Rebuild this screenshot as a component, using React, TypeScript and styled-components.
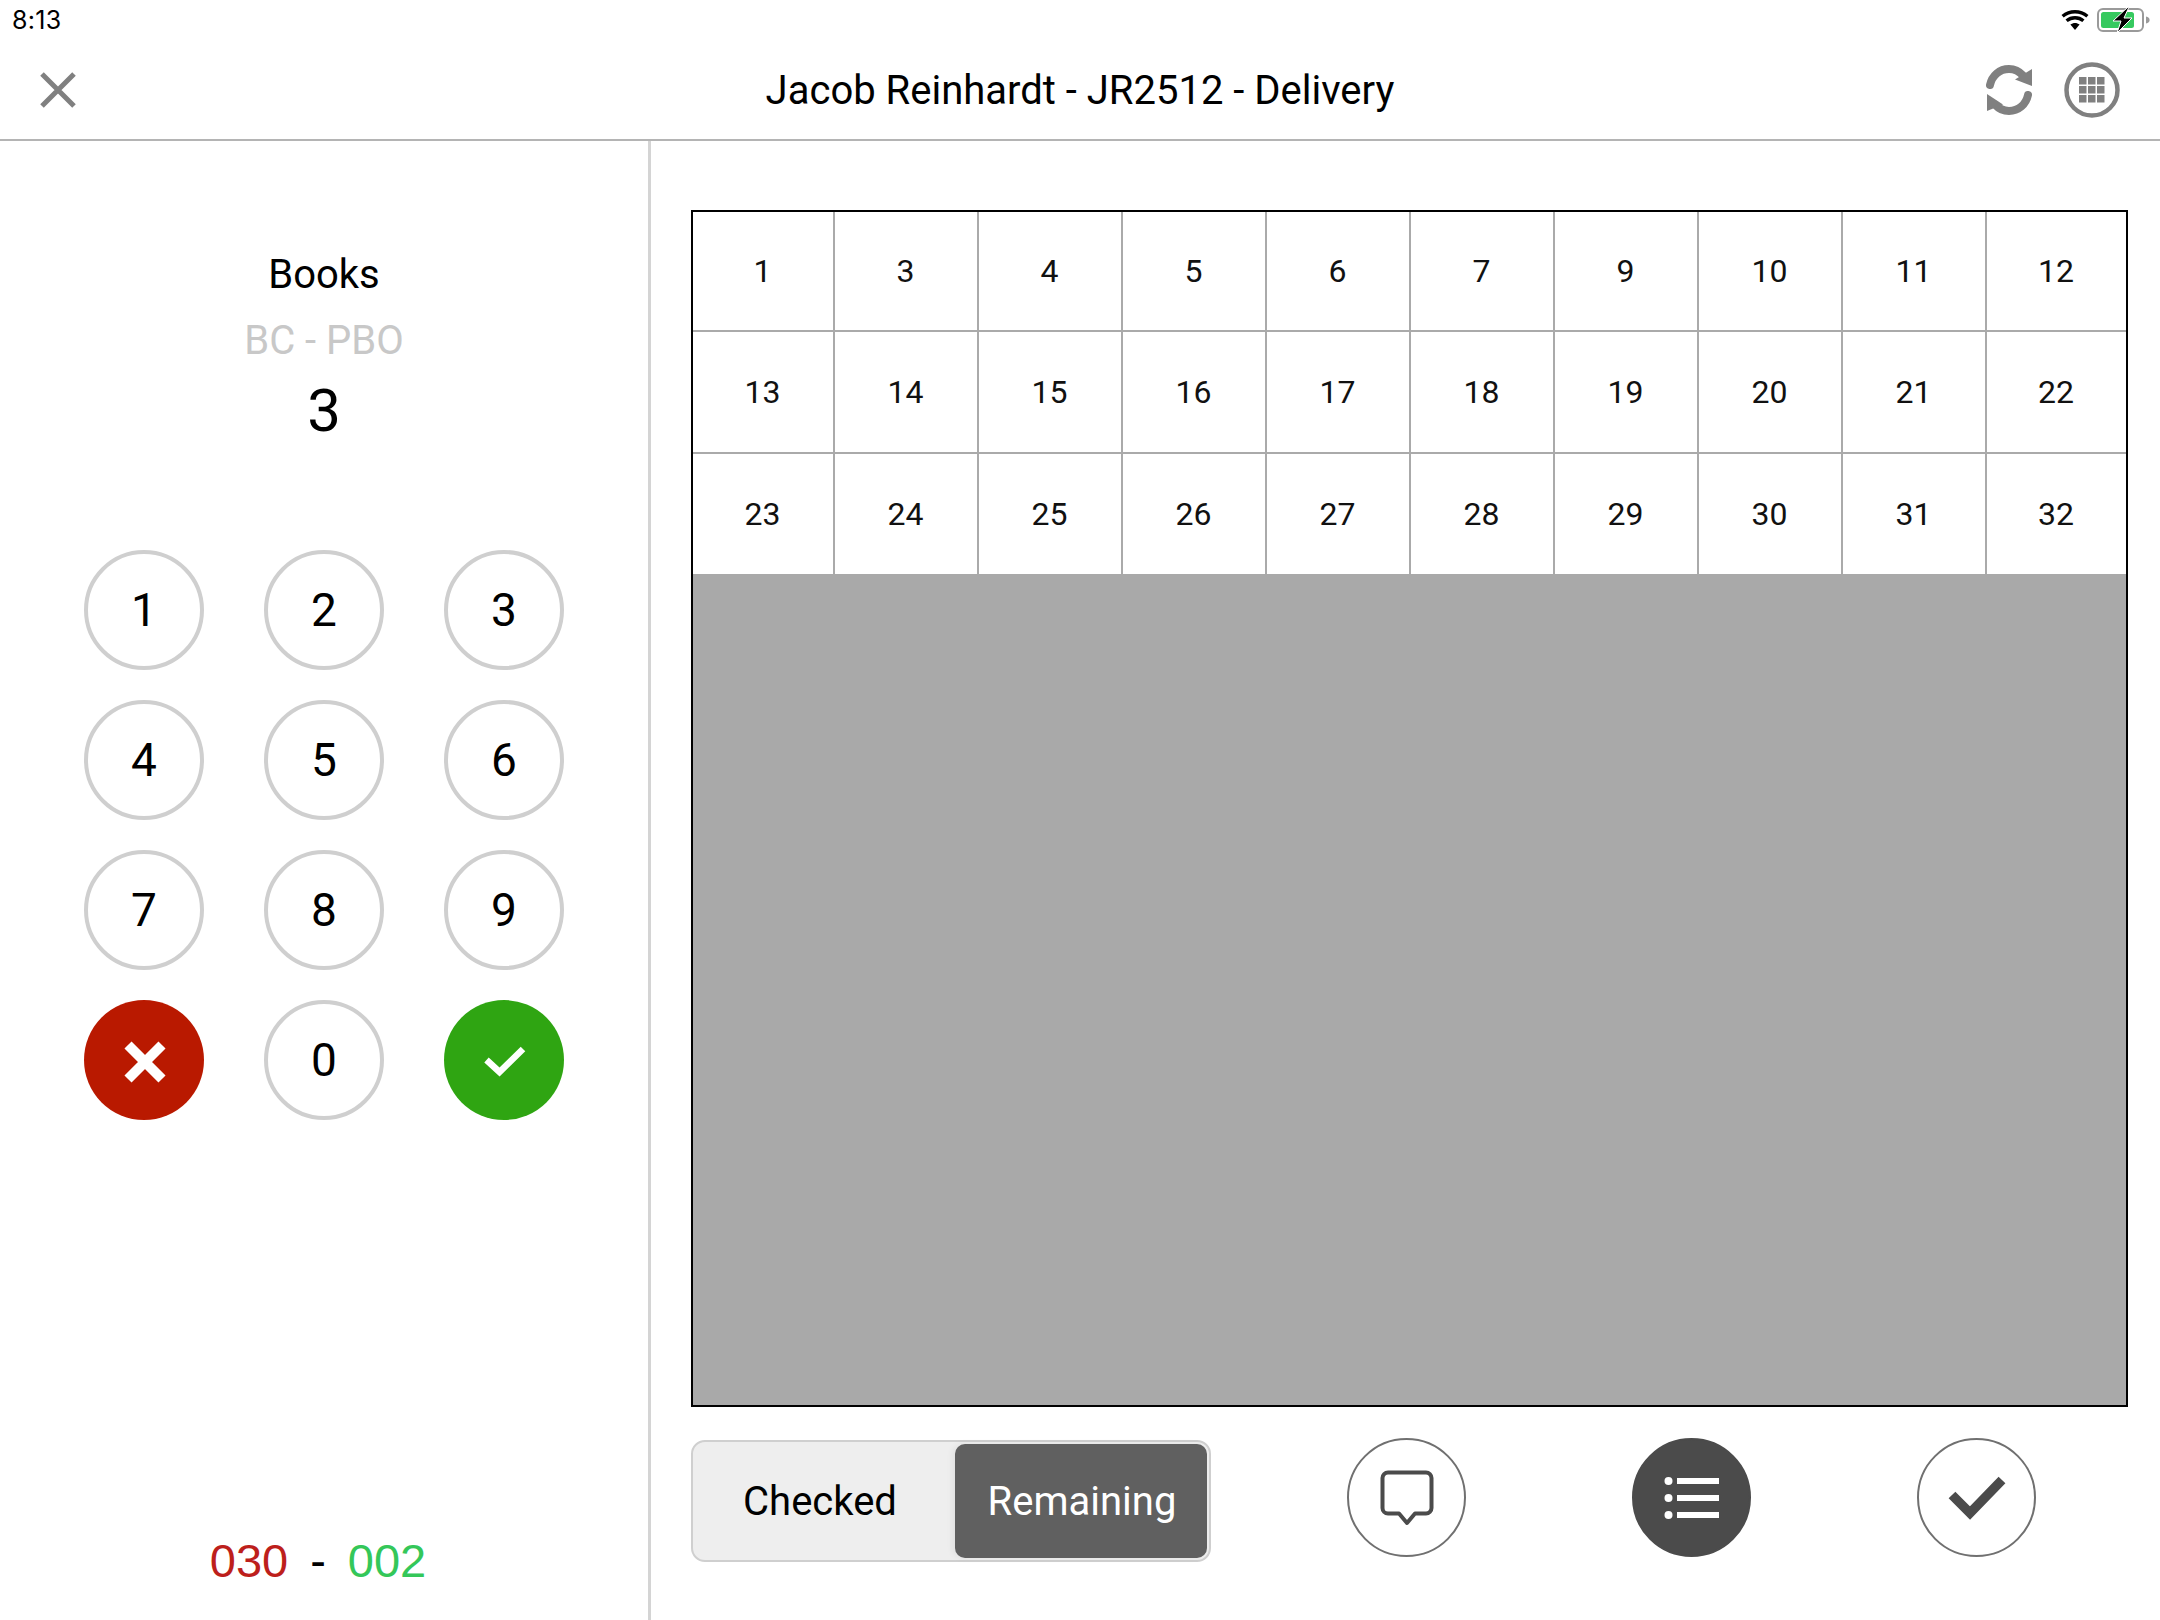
import React from "react";
import styled, { createGlobalStyle } from "styled-components";

const Global = createGlobalStyle`
  html, body { margin: 0; padding: 0; background: #fff; }
  * { box-sizing: border-box; }
  body { font-family: Roboto, "Liberation Sans", sans-serif; color: #000; }
`;

const Page = styled.div`
  width: 2160px;
  height: 1620px;
  display: flex;
  flex-direction: column;
  overflow: hidden;
`;

const StatusBar = styled.div`
  height: 40px;
  padding: 6px 9px 0 12px;
  display: flex;
  justify-content: space-between;
  align-items: flex-start;
`;

const Clock = styled.span`
  font-family: Inter, "Liberation Sans", sans-serif;
  font-size: 25px;
  line-height: 28px;
  letter-spacing: 0.3px;
`;

const StatusIcons = styled.div`
  display: flex;
  align-items: center;
  gap: 8px;
`;

const Header = styled.header`
  height: 101px;
  flex: none;
  display: grid;
  grid-template-columns: 1fr auto 1fr;
  align-items: center;
  padding: 0 40px 0 40px;
  border-bottom: 2px solid #b4b4b4;
`;

const Title = styled.h1`
  margin: 0;
  font-weight: 400;
  font-size: 40px;
  line-height: 50px;
  position: relative;
  top: 1px;
`;

const HeaderActions = styled.div`
  display: flex;
  justify-content: flex-end;
  align-items: center;
  gap: 32px;
`;

const Body = styled.div`
  flex: 1;
  display: flex;
  min-height: 0;
`;

const Side = styled.aside`
  width: 651px;
  flex: none;
  border-right: 3px solid #d4d4d4;
  display: flex;
  flex-direction: column;
  align-items: center;
  padding: 109px 0 0 0;
`;

const Subject = styled.div`
  font-size: 40px;
  line-height: 50px;
`;

const Code = styled.div`
  font-size: 40px;
  line-height: 50px;
  margin-top: 16px;
  color: #c8c8c8;
`;

const Entered = styled.div`
  font-size: 60px;
  line-height: 70px;
  margin-top: 10px;
`;

const Keypad = styled.div`
  display: grid;
  grid-template-columns: repeat(3, 120px);
  grid-auto-rows: 120px;
  gap: 30px 60px;
  margin-top: 104px;
`;

const Key = styled.div<{ $bg?: string }>`
  border-radius: 50%;
  display: flex;
  align-items: center;
  justify-content: center;
  font-size: 46px;
  background: ${(p) => p.$bg ?? "#fff"};
  border: ${(p) => (p.$bg ? "none" : "4px solid #cfcfcf")};
`;

const Tally = styled.div`
  margin-top: auto;
  margin-bottom: 31px;
  margin-right: 12px;
  display: flex;
  gap: 22px;
  font-family: "Liberation Sans", Arial, sans-serif;
  font-size: 47px;
  line-height: 56px;
`;

const TallyPart = styled.span<{ $color: string }>`
  color: ${(p) => p.$color};
`;

const Main = styled.main`
  flex: 1;
  padding: 69px 32px 0 40px;
  display: flex;
  flex-direction: column;
`;

const Board = styled.div`
  height: 1197px;
  flex: none;
  border: 2px solid #000;
  background: #a9a9a9;
`;

const Cells = styled.div`
  display: grid;
  grid-template-columns: 142px repeat(8, 144px) 1fr;
  grid-template-rows: 120px 122px 120px;
`;

const Cell = styled.div<{ $lastCol: boolean; $lastRow: boolean }>`
  background: #fff;
  display: flex;
  align-items: center;
  justify-content: center;
  padding-right: 1px;
  font-size: 32px;
  color: #111;
  border-right: ${(p) => (p.$lastCol ? "none" : "2px solid #aaa")};
  border-bottom: ${(p) => (p.$lastRow ? "none" : "2px solid #aaa")};
`;

const Footer = styled.div`
  display: flex;
  align-items: flex-start;
  margin-top: 31px;
`;

const Toggle = styled.div`
  width: 520px;
  height: 122px;
  margin-top: 2px;
  border: 2px solid #cfcfcf;
  border-radius: 14px;
  background: #eee;
  padding: 2px;
  display: flex;
  font-size: 40px;
`;

const ToggleOption = styled.div<{ $active?: boolean }>`
  display: flex;
  align-items: center;
  justify-content: center;
  width: ${(p) => (p.$active ? "252px" : "260px")};
  padding-right: ${(p) => (p.$active ? "0" : "10px")};
  padding-left: ${(p) => (p.$active ? "2px" : "0")};
  color: ${(p) => (p.$active ? "#fff" : "#000")};
  background: ${(p) => (p.$active ? "#606060" : "transparent")};
  border-radius: 10px;
  box-shadow: ${(p) => (p.$active ? "-3px 0 6px rgba(0,0,0,0.05)" : "none")};
`;

const ActionGroup = styled.div`
  display: flex;
  gap: 166px;
  margin-left: 136px;
`;

const Action = styled.div<{ $filled?: boolean }>`
  width: 119px;
  height: 119px;
  border-radius: 50%;
  display: flex;
  align-items: center;
  justify-content: center;
  border: 2px solid #707070;
  background: ${(p) => (p.$filled ? "#4b4b4b" : "#fff")};
  border-color: ${(p) => (p.$filled ? "#4b4b4b" : "#707070")};
`;

const Wifi = () => (
  <svg width="28" height="20" viewBox="0 0 28 20">
    <path d="M14 20l-4.600-5.400c2.700-2.200 6.500-2.200 9.200 0z" fill="#000" />
    <path d="M5.600 10.800c4.800-4 12-4 16.800 0" fill="none" stroke="#000" strokeWidth="3.400" />
    <path d="M1.600 6.200c7.200-6 17.600-6 24.800 0" fill="none" stroke="#000" strokeWidth="3.400" />
  </svg>
);

const Battery = () => (
  <svg width="54" height="28" viewBox="0 0 54 28">
    <rect x="1" y="3" width="45" height="22" rx="5" fill="#fff" stroke="#9a9a9a" strokeWidth="2" />
    <rect x="4" y="6" width="33" height="16" rx="2.500" fill="#36c95f" />
    <path d="M49 10.500c2.400.5 3.600 1.800 3.600 3.500s-1.200 3-3.600 3.500z" fill="#9a9a9a" />
    <path d="M31 1L16 15h8l-4 12 15-15h-8l5-11z" fill="#000" stroke="#fff" strokeWidth="1" />
  </svg>
);

const CloseIcon = () => (
  <svg width="36" height="36" viewBox="0 0 36 36">
    <path d="M2 2l32 32M34 2L2 34" stroke="#808080" strokeWidth="5" />
  </svg>
);

const SyncIcon = () => (
  <svg width="46" height="50" viewBox="0 0 46 50">
    <path d="M4 20C6 10.500 13.500 4 23 4c5.700 0 10 2 14 6.500" fill="none" stroke="#808080" strokeWidth="8" strokeLinecap="round" />
    <path d="M46 4v17L29 14.500z" fill="#808080" />
    <path d="M42 30c-2 9.500-9.500 16-19 16-5.700 0-10-2-14-6.500" fill="none" stroke="#808080" strokeWidth="8" strokeLinecap="round" />
    <path d="M1 29v17l16-6.500z" fill="#808080" />
  </svg>
);

const GridIcon = () => (
  <svg width="56" height="56" viewBox="0 0 56 56">
    <circle cx="28" cy="28" r="25.500" fill="none" stroke="#808080" strokeWidth="4.500" />
    {[15, 24, 33].flatMap((y) =>
      [15, 24, 33].map((x) => <rect key={`${x}-${y}`} x={x} y={y} width="7.500" height="7.500" fill="#808080" />)
    )}
  </svg>
);

const CrossIcon = () => (
  <svg width="48" height="48" viewBox="0 0 48 48">
    <path d="M8 9l34 34M42 9L8 43" stroke="#fff" strokeWidth="10" />
  </svg>
);

const TickSmall = () => (
  <svg width="44" height="34" viewBox="0 0 44 34">
    <path d="M4.500 17l13 12L41 6" fill="none" stroke="#fff" strokeWidth="6.500" />
  </svg>
);

const BubbleIcon = () => (
  <svg width="54" height="56" viewBox="0 0 54 56">
    <path
      d="M8 2.500h38a5.500 5.500 0 0 1 5.500 5.500v30a5.500 5.500 0 0 1-5.500 5.500H35L27 53l-8-9.500H8A5.500 5.500 0 0 1 2.500 38V8A5.500 5.500 0 0 1 8 2.500z"
      fill="#fff"
      stroke="#4b4b4b"
      strokeWidth="4"
      strokeLinejoin="round"
    />
  </svg>
);

const ListIcon = () => (
  <svg width="56" height="44" viewBox="0 0 56 44">
    {[5, 22, 39].map((y) => (
      <g key={y} fill="#fff">
        <circle cx="4.500" cy={y} r="4" />
        <rect x="13" y={y - 3} width="42" height="6" />
      </g>
    ))}
  </svg>
);

const TickLarge = () => (
  <svg width="58" height="44" viewBox="0 0 58 44">
    <path d="M4 19l18 18L54 4" fill="none" stroke="#4b4b4b" strokeWidth="9.500" />
  </svg>
);

const rows = [
  [1, 3, 4, 5, 6, 7, 9, 10, 11, 12],
  [13, 14, 15, 16, 17, 18, 19, 20, 21, 22],
  [23, 24, 25, 26, 27, 28, 29, 30, 31, 32],
];

export default function App() {
  return (
    <Page>
      <Global />
      <StatusBar>
        <Clock>8:13</Clock>
        <StatusIcons>
          <Wifi />
          <Battery />
        </StatusIcons>
      </StatusBar>
      <Header>
        <CloseIcon />
        <Title>Jacob Reinhardt - JR2512 - Delivery</Title>
        <HeaderActions>
          <SyncIcon />
          <GridIcon />
        </HeaderActions>
      </Header>
      <Body>
        <Side>
          <Subject>Books</Subject>
          <Code>BC - PBO</Code>
          <Entered>3</Entered>
          <Keypad>
            {[1, 2, 3, 4, 5, 6, 7, 8, 9].map((n) => (
              <Key key={n}>{n}</Key>
            ))}
            <Key $bg="#b91900">
              <CrossIcon />
            </Key>
            <Key>0</Key>
            <Key $bg="#2fa512">
              <TickSmall />
            </Key>
          </Keypad>
          <Tally>
            <TallyPart $color="#bd1f1c">030</TallyPart>
            <TallyPart $color="#000">-</TallyPart>
            <TallyPart $color="#34c759">002</TallyPart>
          </Tally>
        </Side>
        <Main>
          <Board>
            <Cells>
              {rows.flatMap((row, r) =>
                row.map((n, c) => (
                  <Cell key={n} $lastCol={c === 9} $lastRow={r === 2}>
                    {n}
                  </Cell>
                ))
              )}
            </Cells>
          </Board>
          <Footer>
            <Toggle>
              <ToggleOption>Checked</ToggleOption>
              <ToggleOption $active>Remaining</ToggleOption>
            </Toggle>
            <ActionGroup>
              <Action>
                <BubbleIcon />
              </Action>
              <Action $filled>
                <ListIcon />
              </Action>
              <Action>
                <TickLarge />
              </Action>
            </ActionGroup>
          </Footer>
        </Main>
      </Body>
    </Page>
  );
}
